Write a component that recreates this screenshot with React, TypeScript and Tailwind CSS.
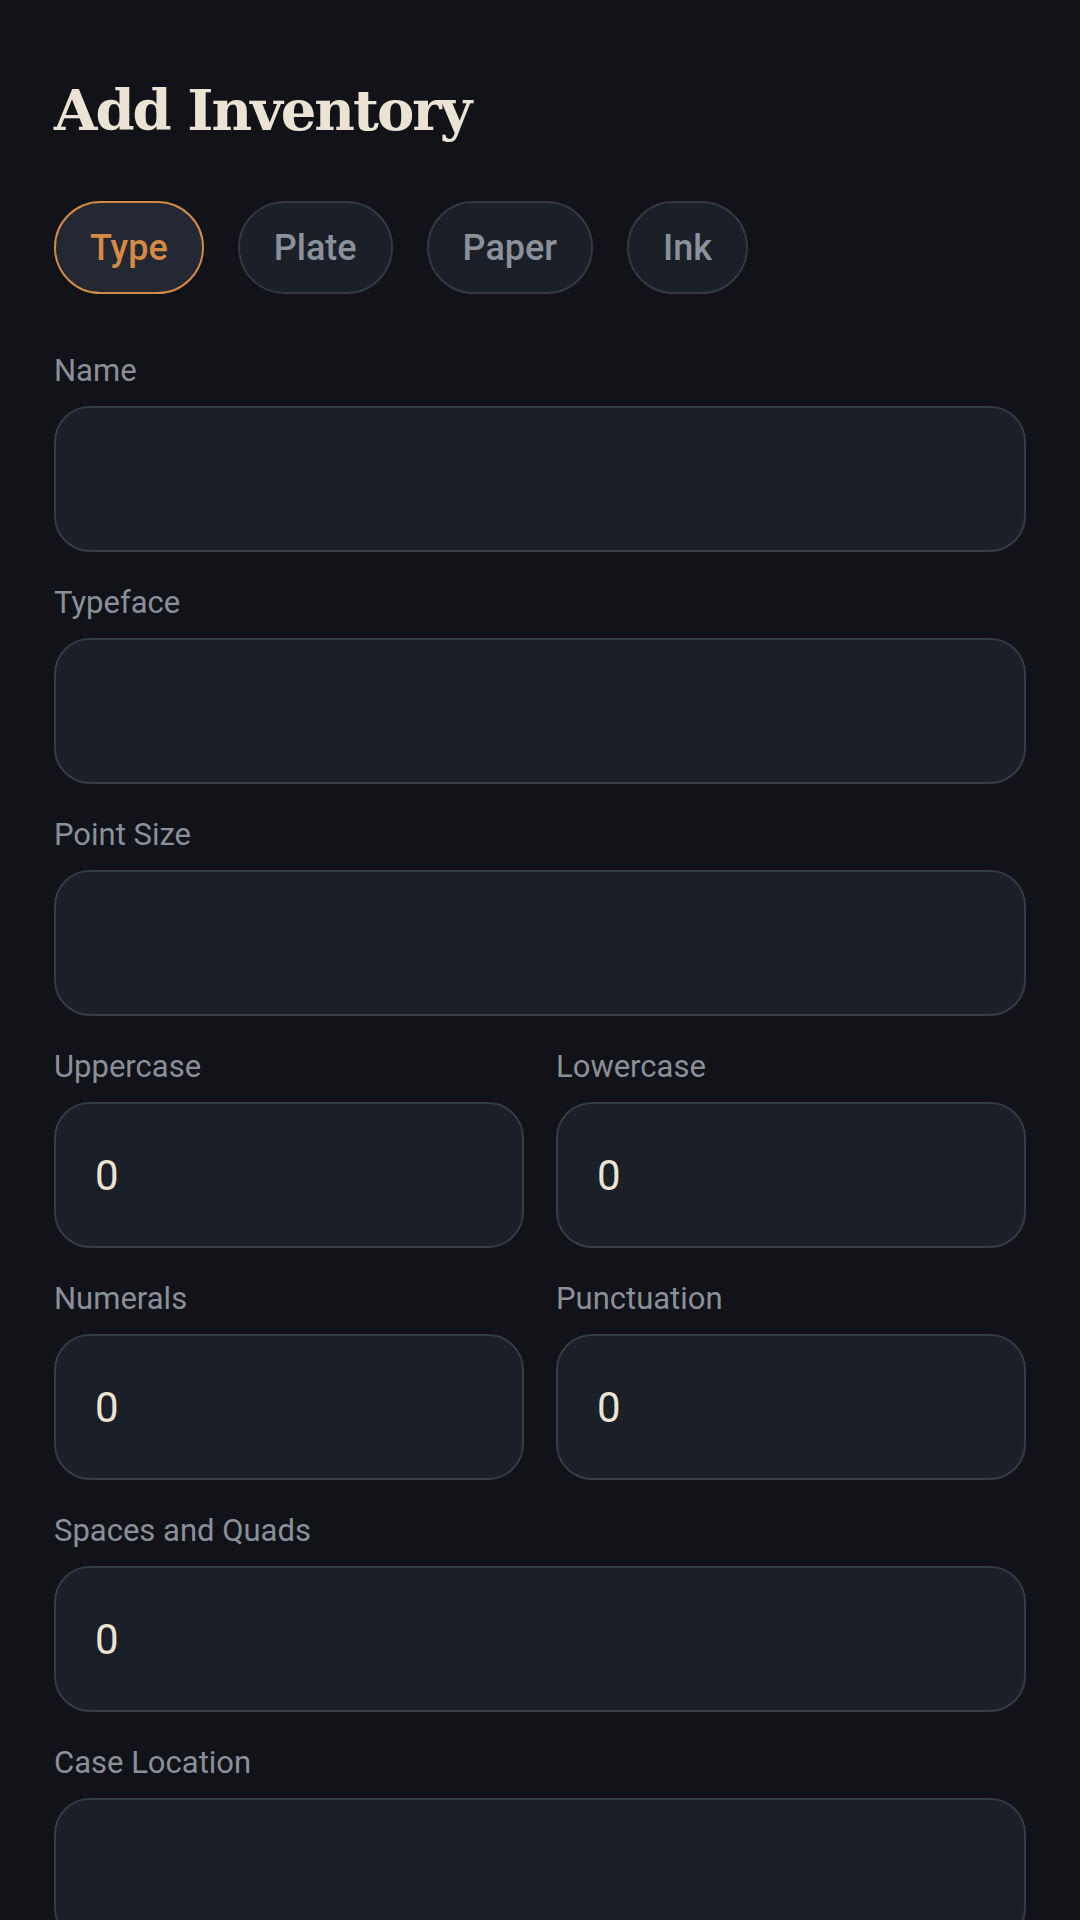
import React, { useState } from 'react';

const TABS = ['Type', 'Plate', 'Paper', 'Ink'];

const Field = ({ label, value }: { label: string; value?: string }) => (
  <div className="flex flex-col">
    <label className="pt-[2px] text-[31px] leading-[36px] text-[#8a909a] mb-[17px]">{label}</label>
    <input
      defaultValue={value}
      className="h-[146px] w-full rounded-[36px] border-2 border-[#363c46] bg-[#1b1f27] px-[39px] text-[42px] text-[#ede4d3] outline-none"
    />
  </div>
);

export default function App() {
  const [tab, setTab] = useState('Type');

  return (
    <div className="min-h-screen bg-[#111318] px-[54px] pt-[74px] font-['Roboto',_sans-serif]">
      <h1 className="font-['DejaVu_Serif',_serif] text-[56px] leading-[72px] font-bold tracking-[-2px] text-[#ebe3d4]">
        Add Inventory
      </h1>

      {/* Category tabs */}
      <div className="mt-[55px] flex gap-[34px]">
        {TABS.map((t) => (
          <button
            key={t}
            onClick={() => setTab(t)}
            className={
              t === tab
                ? 'h-[93px] rounded-full border-2 border-[#d08a45] bg-[#232833] px-[34px] text-[36px] font-medium text-[#d58a45]'
                : 'h-[93px] rounded-full border-2 border-[#333841] bg-[#1b1f27] px-[34px] text-[36px] font-medium text-[#8b919b]'
            }
          >
            {t}
          </button>
        ))}
      </div>

      <div className="mt-[57px] flex flex-col gap-[31px]">
        <Field label="Name" />
        <Field label="Typeface" />
        <Field label="Point Size" />
        <div className="grid grid-cols-2 gap-[32px]">
          <Field label="Uppercase" value="0" />
          <Field label="Lowercase" value="0" />
        </div>
        <div className="grid grid-cols-2 gap-[32px]">
          <Field label="Numerals" value="0" />
          <Field label="Punctuation" value="0" />
        </div>
        <Field label="Spaces and Quads" value="0" />
        <Field label="Case Location" />
      </div>
    </div>
  );
}
